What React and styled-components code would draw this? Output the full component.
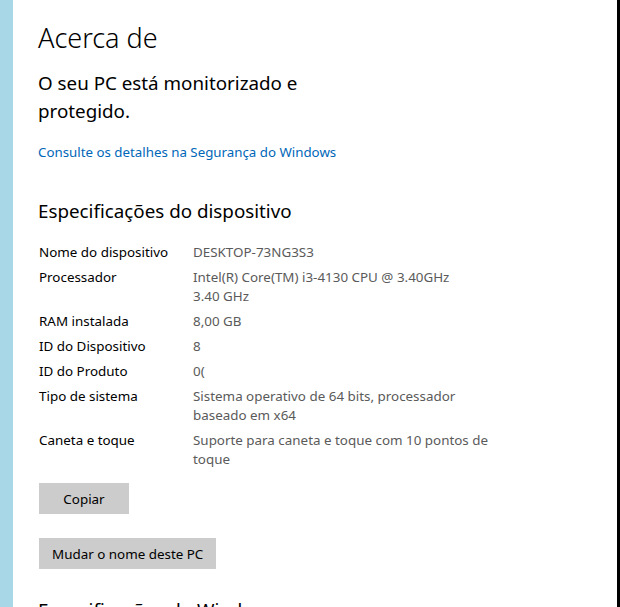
import React from "react";
import styled, { createGlobalStyle } from "styled-components";

const GlobalStyle = createGlobalStyle`
  html, body {
    margin: 0;
    padding: 0;
    background: #fff;
  }
  body {
    font-family: "Noto Sans", "Open Sans", sans-serif;
    color: #000;
  }
`;

const specs = [
  { label: "Nome do dispositivo", value: ["DESKTOP-73NG3S3"] },
  { label: "Processador", value: ["Intel(R) Core(TM) i3-4130 CPU @ 3.40GHz", "3.40 GHz"] },
  { label: "RAM instalada", value: ["8,00 GB"] },
  { label: "ID do Dispositivo", value: ["8"] },
  { label: "ID do Produto", value: ["0("] },
  { label: "Tipo de sistema", value: ["Sistema operativo de 64 bits, processador baseado em x64"] },
  { label: "Caneta e toque", value: ["Suporte para caneta e toque com 10 pontos de toque"] },
];

const App = () => {
  return (
    <>
      <GlobalStyle />
      <Window>
        <Strip />
        <Page>
          <Title>Acerca de</Title>
          <Status>O seu PC está monitorizado e protegido.</Status>
          <Link href="#">Consulte os detalhes na Segurança do Windows</Link>
          <Heading>Especificações do dispositivo</Heading>
          <SpecList>
            {specs.map((s) => (
              <SpecRow key={s.label}>
                <Label>{s.label}</Label>
                <Value>
                  {s.value.map((v) => (
                    <div key={v}>{v}</div>
                  ))}
                </Value>
              </SpecRow>
            ))}
          </SpecList>
          <Button $top={14}>Copiar</Button>
          <Button $top={24}>Mudar o nome deste PC</Button>
          <Heading $top={27}>Especificações do Windows</Heading>
        </Page>
      </Window>
    </>
  );
};

export default App;

const Window = styled.div`
  display: flex;
  width: 620px;
  height: 607px;
  overflow: hidden;
  box-sizing: border-box;
  border-right: 3px solid #000;
`;

const Strip = styled.div`
  flex: 0 0 13px;
  background: #a8d8e8;
`;

const Page = styled.div`
  flex: 1;
  display: flex;
  flex-direction: column;
  align-items: flex-start;
  padding: 18px 0 0 25px;

  > * {
    flex-shrink: 0;
  }
`;

const Title = styled.h1`
  margin: 0;
  font-size: 27px;
  font-weight: 300;
  line-height: 40px;
`;

const Status = styled.p`
  margin: 11px 0 0;
  max-width: 280px;
  font-size: 18.8px;
  font-weight: 400;
  line-height: 28px;
`;

const Link = styled.a`
  margin-top: 17px;
  font-size: 13.3px;
  line-height: 20px;
  color: #0067b8;
  text-decoration: none;
`;

const Heading = styled.h2`
  margin: ${(p) => p.$top ?? 35}px 0 0;
  font-size: 18.8px;
  font-weight: 400;
  line-height: 28px;
  white-space: nowrap;
`;

const SpecList = styled.div`
  display: flex;
  flex-direction: column;
  gap: 6px;
  margin-top: 18px;
  font-size: 13.4px;
  line-height: 19px;
`;

const SpecRow = styled.div`
  display: flex;
  padding-left: 1px;
`;

const Label = styled.div`
  flex: 0 0 154px;
  color: #000;
`;

const Value = styled.div`
  width: 300px;
  color: #5a5a5a;
`;

const Button = styled.button`
  margin: ${(p) => p.$top}px 0 0 1px;
  min-width: 90px;
  height: 31px;
  padding: 0 13px;
  border: none;
  background: #cccccc;
  font-family: inherit;
  font-size: 13.4px;
  color: #000;
`;
